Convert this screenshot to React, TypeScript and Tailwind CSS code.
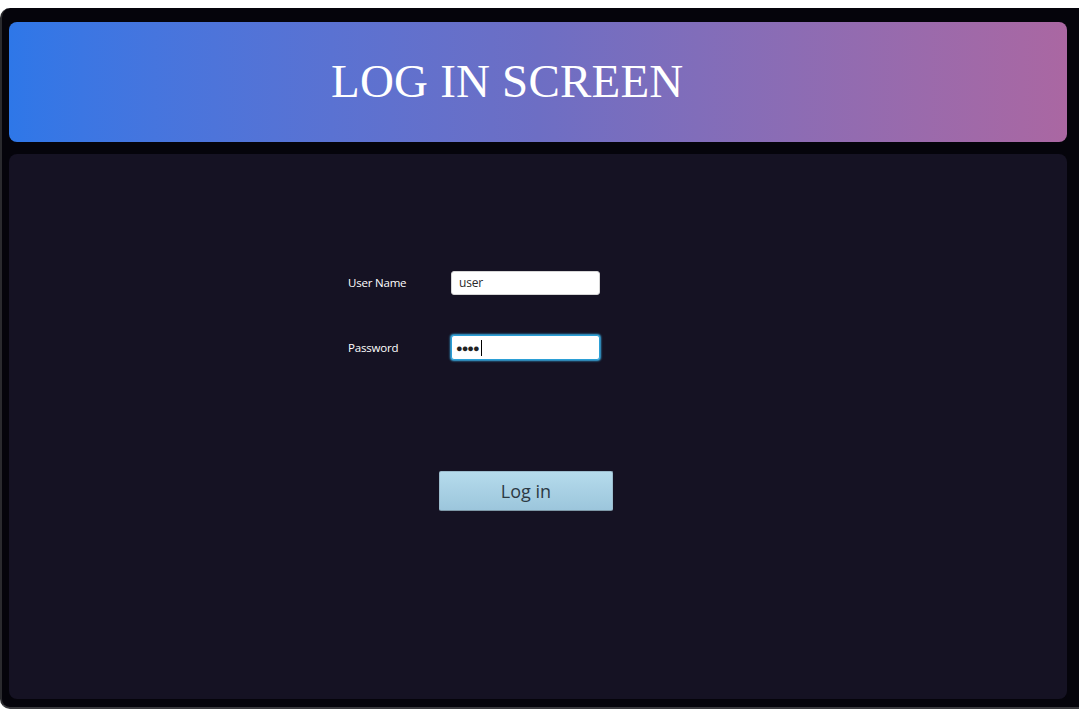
export default function App() {
  return (
    <div className="w-[1079px] h-[709px] bg-white pt-2 overflow-hidden">
      <div className="h-[701px] bg-[#05040b] border-l-2 border-b-2 border-l-[#2a2a2e] border-b-[#3a3a3e] rounded-tl-[10px] rounded-bl-[10px] pl-[7px] pr-[12px] pt-[14px] pb-[8px] flex flex-col gap-[12px]">
        <header className="h-[120px] rounded-[8px] bg-linear-to-r from-[#2e77e8] via-[#6d6ec4] to-[#aa67a2] pl-[322px] pt-[36px]">
          <h1 className="text-[47px] leading-none text-white tracking-[0.2px] font-['Liberation_Serif',serif]">
            LOG IN SCREEN
          </h1>
        </header>
        <main className="flex-1 rounded-[8px] bg-[#151223] pl-[339px] pt-[117px] font-['Open_Sans','Noto_Sans',sans-serif]">
          <div className="flex flex-col gap-[40px]">
            <div className="flex items-center h-[24px]">
              <span className="w-[103px] text-[11.5px] tracking-[-0.2px] text-white">User Name</span>
              <div className="w-[149px] h-[24px] rounded-[3px] bg-white border border-[#d6d6d6] flex items-center px-[7px] text-[12px] tracking-[-0.2px] text-[#2a2a2a]">
                user
              </div>
            </div>
            <div className="flex items-center h-[24px] pt-[1px]">
              <span className="w-[103px] text-[11.5px] tracking-[-0.2px] text-white">Password</span>
              <div className="w-[149px] h-[25px] rounded-[3px] bg-white border border-[#2b9fd6] shadow-[0_0_2px_1px_#3ab0e6] flex items-center px-[4px] text-[#222]">
                <span className="text-[11px] tracking-[-1px] leading-none">●●●●</span>
                <span className="w-px h-[16px] bg-black ml-[2px]" />
              </div>
            </div>
          </div>
          <button className="ml-[91px] mt-[112px] w-[174px] h-[40px] rounded-[2px] border border-[#9bbccd] border-b-[#7d97a6] bg-linear-to-b from-[#b5dbec] to-[#9cc6dc] text-[18px] text-[#2c3a44]">
            Log in
          </button>
        </main>
      </div>
    </div>
  );
}
